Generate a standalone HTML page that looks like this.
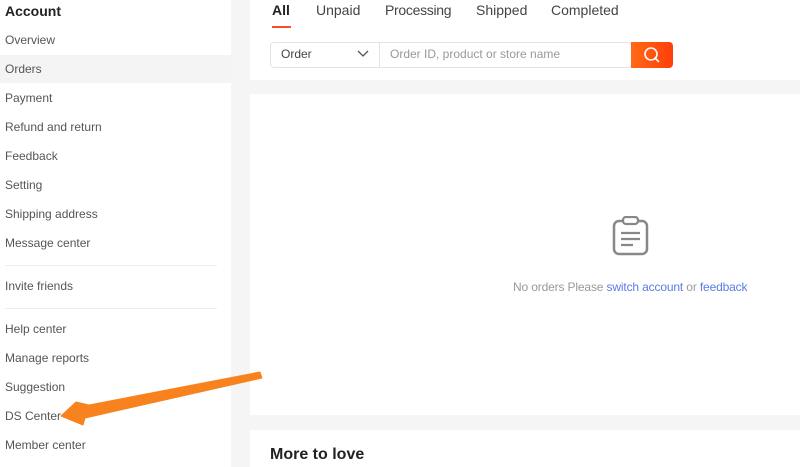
<!DOCTYPE html><html><head><style>
body{margin:0;width:800px;height:467px;overflow:hidden;background:#f5f5f5;font-family:"Liberation Sans",sans-serif;position:relative}
.sb{position:absolute;left:0;top:0;width:231px;height:467px;background:#fff}
.it{position:absolute;left:5px;font-size:12px;color:#555}
.hr{position:absolute;left:5px;width:212px;height:1px;background:#eee}
.p{position:absolute;left:250px;width:550px;background:#fff}
.tab{position:absolute;top:2px;font-size:14px;color:#444}
</style></head><body>
<div class="sb">
<div class="it" style="top:3px;font-size:14px;font-weight:bold;color:#222">Account</div>
<div class="it" style="top:33px">Overview</div>
<div style="position:absolute;left:0;top:55px;width:231px;height:28px;background:#f4f4f4"></div>
<div class="it" style="top:62px">Orders</div>
<div class="it" style="top:91px">Payment</div>
<div class="it" style="top:120px">Refund and return</div>
<div class="it" style="top:149px">Feedback</div>
<div class="it" style="top:178px">Setting</div>
<div class="it" style="top:207px">Shipping address</div>
<div class="it" style="top:236px">Message center</div>
<div class="hr" style="top:265px"></div>
<div class="it" style="top:279px">Invite friends</div>
<div class="hr" style="top:308px"></div>
<div class="it" style="top:322px">Help center</div>
<div class="it" style="top:351px">Manage reports</div>
<div class="it" style="top:380px">Suggestion</div>
<div class="it" style="top:409px">DS Center</div>
<div class="it" style="top:438px">Member center</div>
</div>
<div class="p" style="top:0;height:80px">
<div class="tab" style="left:22px;font-weight:bold;color:#222">All</div>
<div style="position:absolute;left:22px;top:26px;width:19px;height:2px;background:#fd4a2a"></div>
<div class="tab" style="left:66px">Unpaid</div>
<div class="tab" style="left:135px;letter-spacing:-0.3px">Processing</div>
<div class="tab" style="left:226px">Shipped</div>
<div class="tab" style="left:301px">Completed</div>
<div style="position:absolute;left:20px;top:42px;width:360px;height:24px;border:1px solid #e3e3e3;border-radius:4px"></div>
<div style="position:absolute;left:129px;top:43px;width:1px;height:24px;background:#e3e3e3"></div>
<div style="position:absolute;left:31px;top:47px;font-size:12px;color:#444">Order</div>
<svg style="position:absolute;left:107px;top:50px" width="12" height="8"><path d="M1 1l5 5 5-5" fill="none" stroke="#555" stroke-width="1.3"/></svg>
<div style="position:absolute;left:140px;top:47px;font-size:12px;color:#999">Order ID, product or store name</div>
<div style="position:absolute;left:381px;top:42px;width:42px;height:26px;border-radius:0 4px 4px 0;background:linear-gradient(90deg,#ff6a16,#ff3e0a)"></div>
<svg style="position:absolute;left:392px;top:46px" width="20" height="18"><circle cx="9" cy="8" r="6" fill="none" stroke="#fff" stroke-width="1.6"/><path d="M13 12l4 4" stroke="#fff" stroke-width="1.6"/></svg>
</div>
<div class="p" style="top:94px;height:321px">
<svg style="position:absolute;left:362px;top:122px" width="40" height="40"><rect x="2" y="5" width="33" height="33" rx="5" fill="none" stroke="#888" stroke-width="2.5"/><rect x="11" y="1" width="15" height="7" rx="3" fill="#fff" stroke="#888" stroke-width="2.3"/><path d="M9 17h19M9 23h19M9 29h12" stroke="#888" stroke-width="2.3"/></svg>
<div style="position:absolute;left:263px;top:186px;font-size:12px;color:#999;letter-spacing:-0.15px">No orders Please <span style="color:#5a7ce8">switch account</span> or <span style="color:#5a7ce8">feedback</span></div>
</div>
<div class="p" style="top:430px;height:37px">
<div style="position:absolute;left:20px;top:16px;font-size:16px;font-weight:bold;color:#222">More to love</div>
</div>
<svg style="position:absolute;left:0;top:0" width="800" height="467"><path d="M260 372 L89 405 L76 402 L61 416 L83 425 L85 418 L262 378 Z" fill="#f7821e" stroke="#f7821e" stroke-width="1" stroke-linejoin="round"/></svg>
</body></html>
